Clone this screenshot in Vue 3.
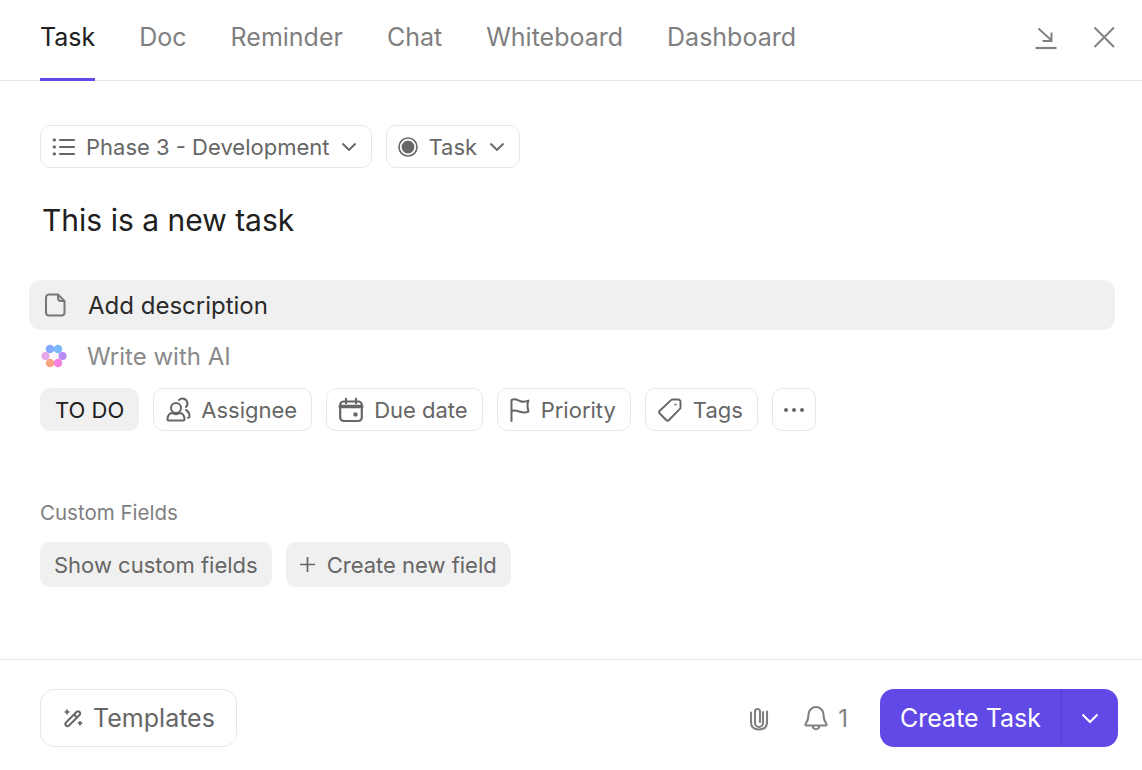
<template>
  <div class="modal">
    <header class="tabs-bar">
      <nav class="tabs">
        <a v-for="(t, i) in tabs" :key="t" class="tab" :class="{ active: i === 0 }">{{ t }}</a>
      </nav>
      <div class="win-actions">
        <svg width="26" height="26" viewBox="0 0 26 26" fill="none" stroke="#808080" stroke-width="2">
          <path d="M5.5 4.5 18.5 16.5M18.5 8.5v8.5h-9" stroke-width="1.9"/>
          <path d="M2.5 24h21" stroke-width="2.2"/>
        </svg>
        <svg width="24" height="24" viewBox="0 0 24 24" fill="none" stroke="#808080" stroke-width="1.9">
          <path d="M2.5 2.5 22 22M22 2.5 2.5 22"/>
        </svg>
      </div>
    </header>

    <main class="body">
      <div class="selectors">
        <button class="chip sel">
          <svg width="24" height="22" viewBox="0 0 24 22" fill="none" stroke="#666" stroke-width="2.2" stroke-linecap="round">
            <path d="M8 4h14M8 11h14M8 18h14"/>
            <path d="M2 4h.6M2 11h.6M2 18h.6" stroke-width="2.8"/>
          </svg>
          <span>Phase 3 - Development</span>
          <svg class="chev" width="16" height="10" viewBox="0 0 16 10" fill="none" stroke="#666" stroke-width="1.9"><path d="M1.5 1.5 8 8l6.5-6.5"/></svg>
        </button>
        <button class="chip sel sel2">
          <svg width="20" height="20" viewBox="0 0 20 20"><circle cx="10" cy="10" r="9" fill="none" stroke="#666" stroke-width="1.6"/><circle cx="10" cy="10" r="6.4" fill="#666"/></svg>
          <span>Task</span>
          <svg class="chev" width="16" height="10" viewBox="0 0 16 10" fill="none" stroke="#666" stroke-width="1.9"><path d="M1.5 1.5 8 8l6.5-6.5"/></svg>
        </button>
      </div>

      <h1 class="title">This is a new task</h1>

      <div class="desc">
        <svg width="24" height="26" viewBox="0 0 24 26" fill="none" stroke="#777" stroke-width="2" stroke-linejoin="round">
          <path d="M6 2.5h9l6.500 6.500v11.500a3 3 0 0 1-3 3H6a3 3 0 0 1-3-3v-15a3 3 0 0 1 3-3z"/>
          <path d="M15 2.500v3.500a3 3 0 0 0 3 3h3.500"/>
        </svg>
        <span>Add description</span>
      </div>
      <div class="ai">
        <svg width="28" height="28" viewBox="0 0 28 28">
          <defs><filter id="b"><feGaussianBlur stdDeviation="0.7"/></filter></defs>
          <g filter="url(#b)">
            <circle cx="10" cy="7" r="4.300" fill="#84a8fb"/>
            <circle cx="18" cy="7" r="4.300" fill="#7cb6fb"/>
            <circle cx="5.500" cy="14" r="4" fill="#e6a6e8"/>
            <circle cx="22.500" cy="14" r="4" fill="#b58af5"/>
            <circle cx="10" cy="21" r="4.300" fill="#f9a183"/>
            <circle cx="18" cy="21" r="4.300" fill="#f77fe0"/>
          </g>
          <path d="M14 9.500c.6 3 1.500 3.900 4.500 4.500-3 .6-3.900 1.500-4.500 4.500-.6-3-1.500-3.900-4.500-4.500 3-.6 3.900-1.500 4.500-4.500z" fill="#fdf3fb"/>
        </svg>
        <span>Write with AI</span>
      </div>

      <div class="props">
        <button class="chip status">TO DO</button>
        <button class="chip">
          <svg width="26" height="26" viewBox="0 0 26 26" fill="none" stroke="#666" stroke-width="2" stroke-linejoin="round" stroke-linecap="round">
            <circle cx="11" cy="11" r="5"/>
            <path d="M2.500 22.500c0-3.500 2-6 4.500-6.500 2.500 1.500 5.500 1.500 8 0 2.500.5 4.500 3 4.500 6.500 0 .8-.4 1-1 1H3.500c-.6 0-1-.2-1-1z"/>
            <path d="M14 3c1-1 2-1.500 3.500-1.500a5 5 0 0 1 3.500 8.500M21 13c2 1 3.500 3.500 3.500 6.500 0 .8-.5 1.200-1.500 1.200"/>
          </svg>
          <span>Assignee</span>
        </button>
        <button class="chip">
          <svg width="26" height="26" viewBox="0 0 26 26" fill="none" stroke="#666" stroke-width="2.200" stroke-linecap="round">
            <rect x="2.200" y="4.500" width="21.600" height="19.500" rx="3.500"/>
            <path d="M2.200 9.500h21.600" stroke-width="3.500"/>
            <path d="M8 1.800v4.500M18 1.800v4.500"/>
            <rect x="15.500" y="15.500" width="4" height="4" rx="1.200" fill="#666" stroke="none"/>
          </svg>
          <span>Due date</span>
        </button>
        <button class="chip">
          <svg width="22" height="26" viewBox="0 0 22 26" fill="none" stroke="#666" stroke-width="2" stroke-linejoin="round" stroke-linecap="round">
            <path d="M2.500 24V3c4-2 6 .2 9 1.200 2.500.8 5 .6 8-.6-1.500 3-1.500 6 0 11-3 1.400-6 1-8.500.2-3-1-5-2-8.500-.8"/>
          </svg>
          <span>Priority</span>
        </button>
        <button class="chip">
          <svg width="26" height="26" viewBox="0 0 26 26" fill="none" stroke="#666" stroke-width="1.900" stroke-linejoin="round">
            <path d="M15.500 2.500h5.500a2.500 2.500 0 0 1 2.500 2.500v5.500a2 2 0 0 1-.6 1.400L12 23a2 2 0 0 1-2.800 0L2.800 16.500a2 2 0 0 1 0-2.800L14 3.100a2 2 0 0 1 1.500-.6z"/>
            <circle cx="18.500" cy="7.500" r="1.100" fill="#666" stroke="none"/>
          </svg>
          <span>Tags</span>
        </button>
        <button class="chip more" aria-label="More">
          <svg width="22" height="6" viewBox="0 0 22 6" fill="#666"><circle cx="3" cy="3" r="2"/><circle cx="11" cy="3" r="2"/><circle cx="19" cy="3" r="2"/></svg>
        </button>
      </div>

      <section class="custom">
        <div class="custom-label">Custom Fields</div>
        <div class="custom-btns">
          <button class="soft">Show custom fields</button>
          <button class="soft">
            <svg width="15" height="15" viewBox="0 0 15 15" stroke="#666" stroke-width="1.700"><path d="M7.500 0v15M0 7.500h15"/></svg>
            <span>Create new field</span>
          </button>
        </div>
      </section>
    </main>

    <footer class="foot">
      <button class="templates">
        <svg width="22" height="22" viewBox="0 0 22 22" fill="none" stroke="#666" stroke-width="2" stroke-linejoin="round">
          <path d="M4 15.500 14.500 5a2.200 2.200 0 0 1 3 0 2.200 2.200 0 0 1 0 3L7 18.500a2.200 2.200 0 0 1-3 0 2.200 2.200 0 0 1 0-3z"/>
          <path d="m12 7.500 3 3"/>
          <path d="M5 2.500v5M2.500 5h5M18 14v4.500M15.800 16.200h4.500" stroke-width="1.700"/>
        </svg>
        <span>Templates</span>
      </button>
      <div class="foot-right">
        <svg class="clip" width="22" height="26" viewBox="0 0 22 26" fill="none" stroke="#808080" stroke-width="2.100" stroke-linecap="round">
          <path d="M15 7v11a4 4 0 0 1-8 0V6.500a2.500 2.500 0 0 1 5 0V17"/>
          <path d="M3 7.500V17c0 5 3 7.500 8 7.500s8-2.500 8-7.500V6.500"/>
        </svg>
        <div class="bell">
          <svg width="26" height="26" viewBox="0 0 26 26" fill="none" stroke="#808080" stroke-width="2" stroke-linejoin="round">
            <path d="M13 2a7.500 7.500 0 0 0-7.500 7.500c0 5-1 7-3 9.500-.5.700 0 1.500.8 1.500h19.400c.8 0 1.300-.8.8-1.500-2-2.500-3-4.500-3-9.500A7.500 7.500 0 0 0 13 2z"/>
            <path d="M9.500 20.500c.3 2.500 1.700 3.700 3.500 3.700s3.200-1.200 3.500-3.700"/>
          </svg>
          <span>1</span>
        </div>
        <div class="create">
          <button class="create-main">Create Task</button>
          <button class="create-more" aria-label="Options">
            <svg width="18" height="11" viewBox="0 0 18 11" fill="none" stroke="#fff" stroke-width="2"><path d="M1.500 1.500 9 9l7.500-7.500"/></svg>
          </button>
        </div>
      </div>
    </footer>
  </div>
</template>

<script setup>
const tabs = ['Task', 'Doc', 'Reminder', 'Chat', 'Whiteboard', 'Dashboard']
</script>

<style>
html, body { margin: 0; background: #fff; }
</style>

<style scoped>
* { box-sizing: border-box; }
button { font: inherit; margin: 0; cursor: pointer; }
.modal {
  width: 1142px;
  height: 770px;
  display: flex;
  flex-direction: column;
  background: #fff;
  font-family: Inter, "Liberation Sans", sans-serif;
  overflow: hidden;
}
.tabs-bar {
  height: 81px;
  flex: none;
  border-bottom: 1px solid #e8e8e8;
  padding: 0 26px 0 40px;
  display: flex;
  justify-content: space-between;
  align-items: center;
}
.tabs { display: flex; gap: 44px; height: 100%; }
.tab {
  position: relative;
  font-size: 25px;
  line-height: 74px;
  color: #7f7f7f;
}
.tab.active { color: #202020; }
.tab.active::after {
  content: "";
  position: absolute;
  left: 0; right: 0; bottom: -1px;
  height: 3px;
  background: #6149e8;
}
.win-actions { display: flex; align-items: center; gap: 33px; margin-bottom: 6px; }
.body {
  flex: 1;
  padding: 44px 27px 0 29px;
  display: flex;
  flex-direction: column;
}
.chip {
  height: 43px;
  display: inline-flex;
  align-items: center;
  gap: 10px;
  padding: 0 14px 0 11px;
  border: 1px solid #e8e8e8;
  border-radius: 10px;
  background: #fff;
  color: #666;
  font-size: 22px;
  white-space: nowrap;
}
.selectors, .props { display: flex; gap: 14px; padding-left: 11px; }
.sel { gap: 10px; font-size: 22px; }
.sel .chev { margin-left: 2px; }
.sel2 { gap: 10px; }
.title {
  margin: 30px 0 0 13px;
  font-size: 30px;
  line-height: 44px;
  font-weight: 400;
  color: #202020;
}
.desc {
  margin-top: 38px;
  height: 50px;
  display: flex;
  align-items: center;
  gap: 21px;
  padding-left: 14px;
  background: #f0f0f0;
  border-radius: 12px;
  font-size: 24px;
  color: #2a2a2a;
}
.ai {
  height: 50px;
  margin-top: 1px;
  display: flex;
  align-items: center;
  gap: 19px;
  padding-left: 11px;
  font-size: 24px;
  color: #8a8a8a;
}
.props { margin-top: 7px; }
.status {
  background: #f0f0f0;
  border-color: #f0f0f0;
  color: #202020;
  padding: 0 14px;
}
.more { width: 44px; padding: 0; justify-content: center; }
.custom { margin-top: 66px; padding-left: 11px; }
.custom-label { font-size: 20.500px; line-height: 32px; color: #808080; }
.custom-btns { display: flex; gap: 14px; margin-top: 13px; }
.soft {
  height: 45px;
  display: inline-flex;
  align-items: center;
  gap: 12px;
  padding: 0 14px;
  border: none;
  border-radius: 10px;
  background: #f0f0f0;
  color: #666;
  font-size: 22px;
  white-space: nowrap;
}
.foot {
  height: 111px;
  flex: none;
  border-top: 1px solid #e8e8e8;
  padding: 29px 24px 0 40px;
  display: flex;
  justify-content: space-between;
  align-items: flex-start;
}
.templates {
  height: 58px;
  width: 197px;
  display: flex;
  align-items: center;
  justify-content: center;
  gap: 9px;
  border: 1px solid #e8e8e8;
  border-radius: 14px;
  background: #fff;
  color: #666;
  font-size: 25px;
}
.foot-right { display: flex; align-items: center; height: 58px; }
.clip { margin-right: 33px; }
.bell { display: flex; align-items: center; gap: 9px; color: #808080; font-size: 24px; margin-right: 32px; }
.create {
  display: flex;
  width: 238px;
  height: 58px;
  border-radius: 14px;
  overflow: hidden;
  background: #6149e8;
}
.create-main {
  width: 182px;
  border: none;
  border-right: 1px solid #5540cc;
  background: transparent;
  color: #fff;
  font-size: 25px;
}
.create-more {
  flex: 1;
  display: flex;
  align-items: center;
  justify-content: center;
  border: none;
  background: transparent;
}
</style>
